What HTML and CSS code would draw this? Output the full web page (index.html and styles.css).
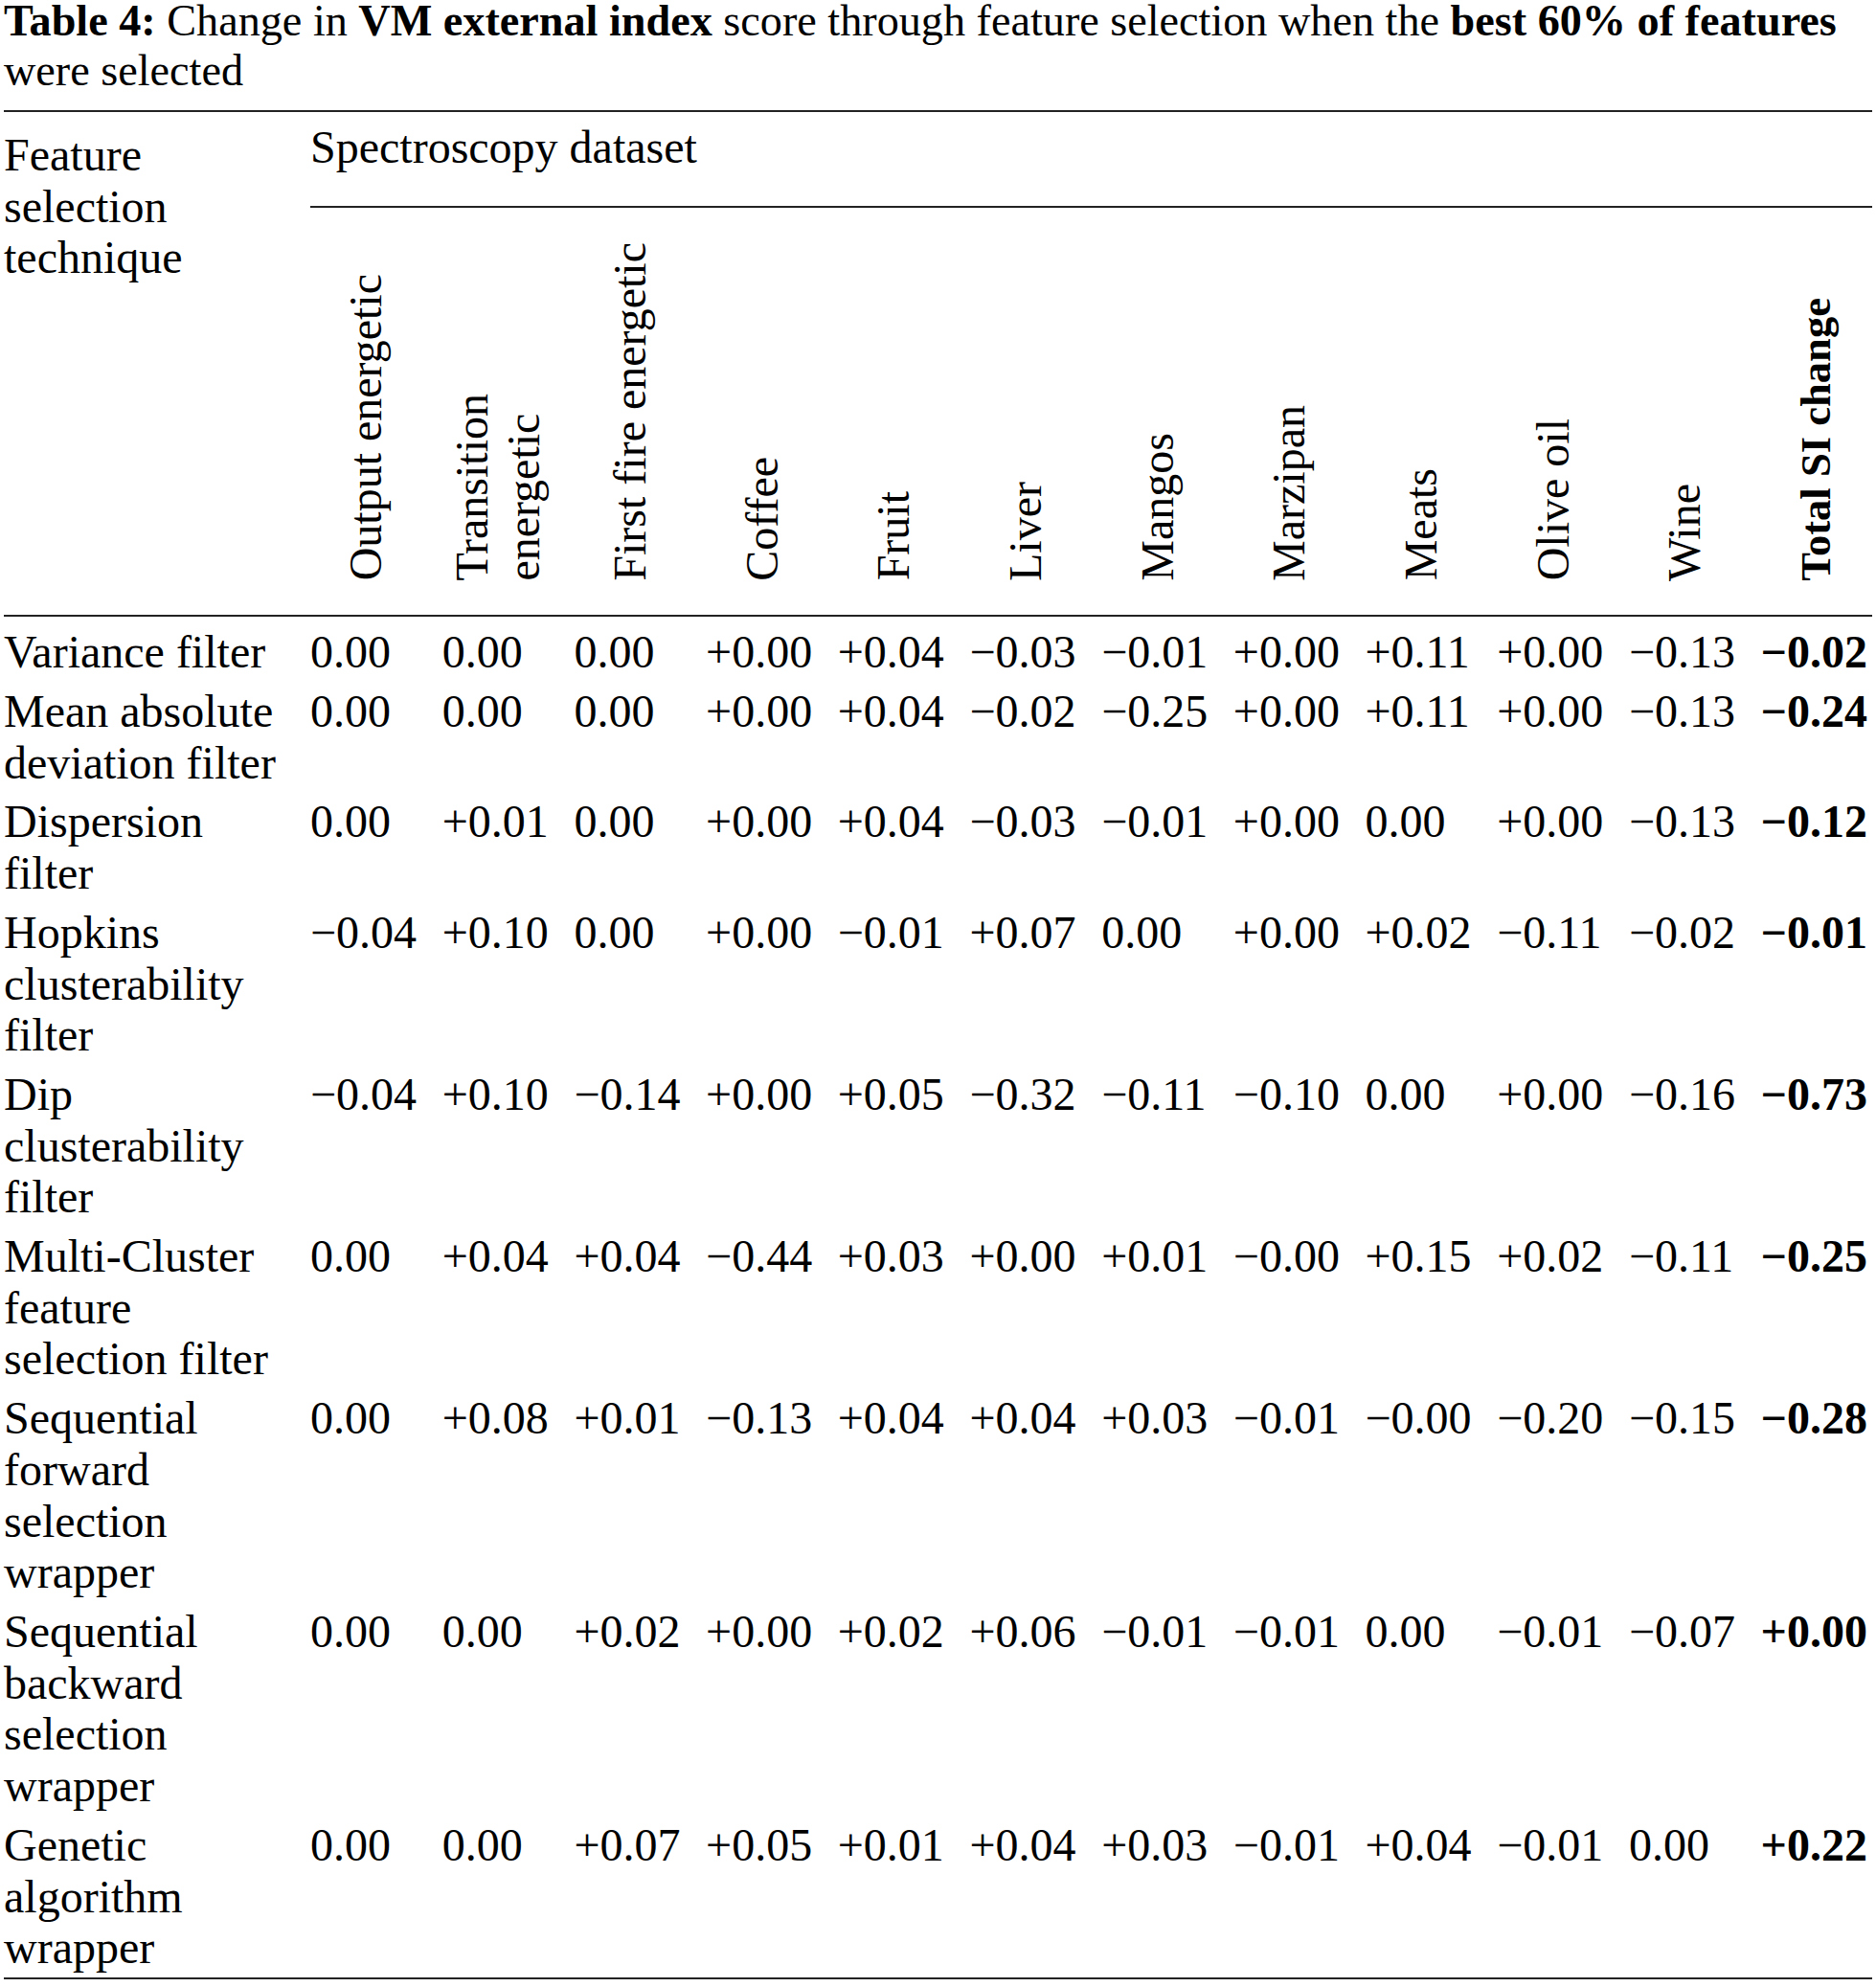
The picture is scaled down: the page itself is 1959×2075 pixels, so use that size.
FILE: index.html
```html
<!DOCTYPE html>
<html lang="en">
<head>
<meta charset="utf-8">
<title>Table 4</title>
<link rel="stylesheet" href="styles.css">
</head>
<body>
<div class="page">
  <p class="caption"><b>Table 4:</b> Change in <b>VM external index</b> score through feature selection when the <b>best 60% of features</b> were selected</p>
  <table class="data-table">
    <colgroup>
      <col class="c-label">
      <col class="c-data"><col class="c-data"><col class="c-data"><col class="c-data">
      <col class="c-data"><col class="c-data"><col class="c-data"><col class="c-data">
      <col class="c-data"><col class="c-data"><col class="c-data">
      <col class="c-last">
    </colgroup>
    <thead>
      <tr>
        <th class="label-head" rowspan="2">Feature selection technique</th>
        <th class="group-head" colspan="12">Spectroscopy dataset</th>
      </tr>
      <tr class="rot-row">
        <th class="rot"><span class="rot-text">Output energetic</span></th>
        <th class="rot"><span class="rot-text">Transition<br>energetic</span></th>
        <th class="rot"><span class="rot-text">First fire energetic</span></th>
        <th class="rot"><span class="rot-text">Coffee</span></th>
        <th class="rot"><span class="rot-text">Fruit</span></th>
        <th class="rot"><span class="rot-text">Liver</span></th>
        <th class="rot"><span class="rot-text">Mangos</span></th>
        <th class="rot"><span class="rot-text">Marzipan</span></th>
        <th class="rot"><span class="rot-text">Meats</span></th>
        <th class="rot"><span class="rot-text">Olive oil</span></th>
        <th class="rot"><span class="rot-text">Wine</span></th>
        <th class="rot last"><span class="rot-text total-head">Total SI change</span></th>
      </tr>
    </thead>
    <tbody>
      <tr>
        <td class="label">Variance filter</td>
        <td>0.00</td><td>0.00</td><td>0.00</td><td>+0.00</td><td>+0.04</td><td>−0.03</td><td>−0.01</td><td>+0.00</td><td>+0.11</td><td>+0.00</td><td>−0.13</td><td class="total">−0.02</td>
      </tr>
      <tr>
        <td class="label">Mean absolute deviation filter</td>
        <td>0.00</td><td>0.00</td><td>0.00</td><td>+0.00</td><td>+0.04</td><td>−0.02</td><td>−0.25</td><td>+0.00</td><td>+0.11</td><td>+0.00</td><td>−0.13</td><td class="total">−0.24</td>
      </tr>
      <tr>
        <td class="label">Dispersion filter</td>
        <td>0.00</td><td>+0.01</td><td>0.00</td><td>+0.00</td><td>+0.04</td><td>−0.03</td><td>−0.01</td><td>+0.00</td><td>0.00</td><td>+0.00</td><td>−0.13</td><td class="total">−0.12</td>
      </tr>
      <tr>
        <td class="label">Hopkins clusterability filter</td>
        <td>−0.04</td><td>+0.10</td><td>0.00</td><td>+0.00</td><td>−0.01</td><td>+0.07</td><td>0.00</td><td>+0.00</td><td>+0.02</td><td>−0.11</td><td>−0.02</td><td class="total">−0.01</td>
      </tr>
      <tr>
        <td class="label">Dip clusterability filter</td>
        <td>−0.04</td><td>+0.10</td><td>−0.14</td><td>+0.00</td><td>+0.05</td><td>−0.32</td><td>−0.11</td><td>−0.10</td><td>0.00</td><td>+0.00</td><td>−0.16</td><td class="total">−0.73</td>
      </tr>
      <tr>
        <td class="label">Multi-Cluster feature selection filter</td>
        <td>0.00</td><td>+0.04</td><td>+0.04</td><td>−0.44</td><td>+0.03</td><td>+0.00</td><td>+0.01</td><td>−0.00</td><td>+0.15</td><td>+0.02</td><td>−0.11</td><td class="total">−0.25</td>
      </tr>
      <tr>
        <td class="label">Sequential forward selection wrapper</td>
        <td>0.00</td><td>+0.08</td><td>+0.01</td><td>−0.13</td><td>+0.04</td><td>+0.04</td><td>+0.03</td><td>−0.01</td><td>−0.00</td><td>−0.20</td><td>−0.15</td><td class="total">−0.28</td>
      </tr>
      <tr>
        <td class="label">Sequential backward selection wrapper</td>
        <td>0.00</td><td>0.00</td><td>+0.02</td><td>+0.00</td><td>+0.02</td><td>+0.06</td><td>−0.01</td><td>−0.01</td><td>0.00</td><td>−0.01</td><td>−0.07</td><td class="total">+0.00</td>
      </tr>
      <tr>
        <td class="label">Genetic algorithm wrapper</td>
        <td>0.00</td><td>0.00</td><td>+0.07</td><td>+0.05</td><td>+0.01</td><td>+0.04</td><td>+0.03</td><td>−0.01</td><td>+0.04</td><td>−0.01</td><td>0.00</td><td class="total">+0.22</td>
      </tr>
    </tbody>
  </table>
</div>
</body>
</html>
```

FILE: styles.css
```css
html, body {
  margin: 0;
  padding: 0;
  background: #fff;
}

body {
  color: #000;
  font-family: "Liberation Serif", "Times New Roman", serif;
}

.page {
  padding: 0 4px;
  width: 1951px;
}

.caption {
  margin: -4px 0 15px 0;
  font-size: 46.2px;
  line-height: 52px;
}

.caption b {
  font-weight: 700;
}

.data-table {
  table-layout: fixed;
  width: 1951.3px;
  border-collapse: separate;
  border-spacing: 0;
  border-top: 2px solid #222;
  border-bottom: 2px solid #222;
  font-size: 48px;
  line-height: 53.7px;
}

.c-label { width: 320px; }
.c-data { width: 137.7px; }
.c-last { width: 116.6px; }

.data-table th,
.data-table td {
  padding: 0 21.1px 0 0;
  text-align: left;
  font-weight: 400;
}

.data-table th.last,
.data-table td.total {
  padding-right: 0;
}

.label-head {
  vertical-align: top;
  padding-top: 18px !important;
  border-bottom: 2px solid #222;
}

.group-head {
  vertical-align: top;
  padding-top: 9.6px !important;
  padding-bottom: 34.7px !important;
  border-bottom: 2px solid #222;
}

.rot-row th.rot {
  vertical-align: bottom;
  text-align: center;
  line-height: 0;
  padding-top: 36px;
  padding-bottom: 35px;
  border-bottom: 2px solid #222;
}

.rot-text {
  display: inline-block;
  writing-mode: vertical-rl;
  transform: rotate(180deg);
  line-height: 53.7px;
  white-space: nowrap;
  text-align: left;
  vertical-align: bottom;
}

.total-head {
  font-weight: 700;
  font-size: 44.6px;
}

.data-table tbody td {
  vertical-align: top;
  white-space: nowrap;
  padding-top: 4px;
  padding-bottom: 4px;
}

.data-table tbody td.label {
  white-space: normal;
}

.data-table tbody tr:first-child td {
  padding-top: 10.7px;
}

.data-table td.total {
  font-weight: 700;
}
```
